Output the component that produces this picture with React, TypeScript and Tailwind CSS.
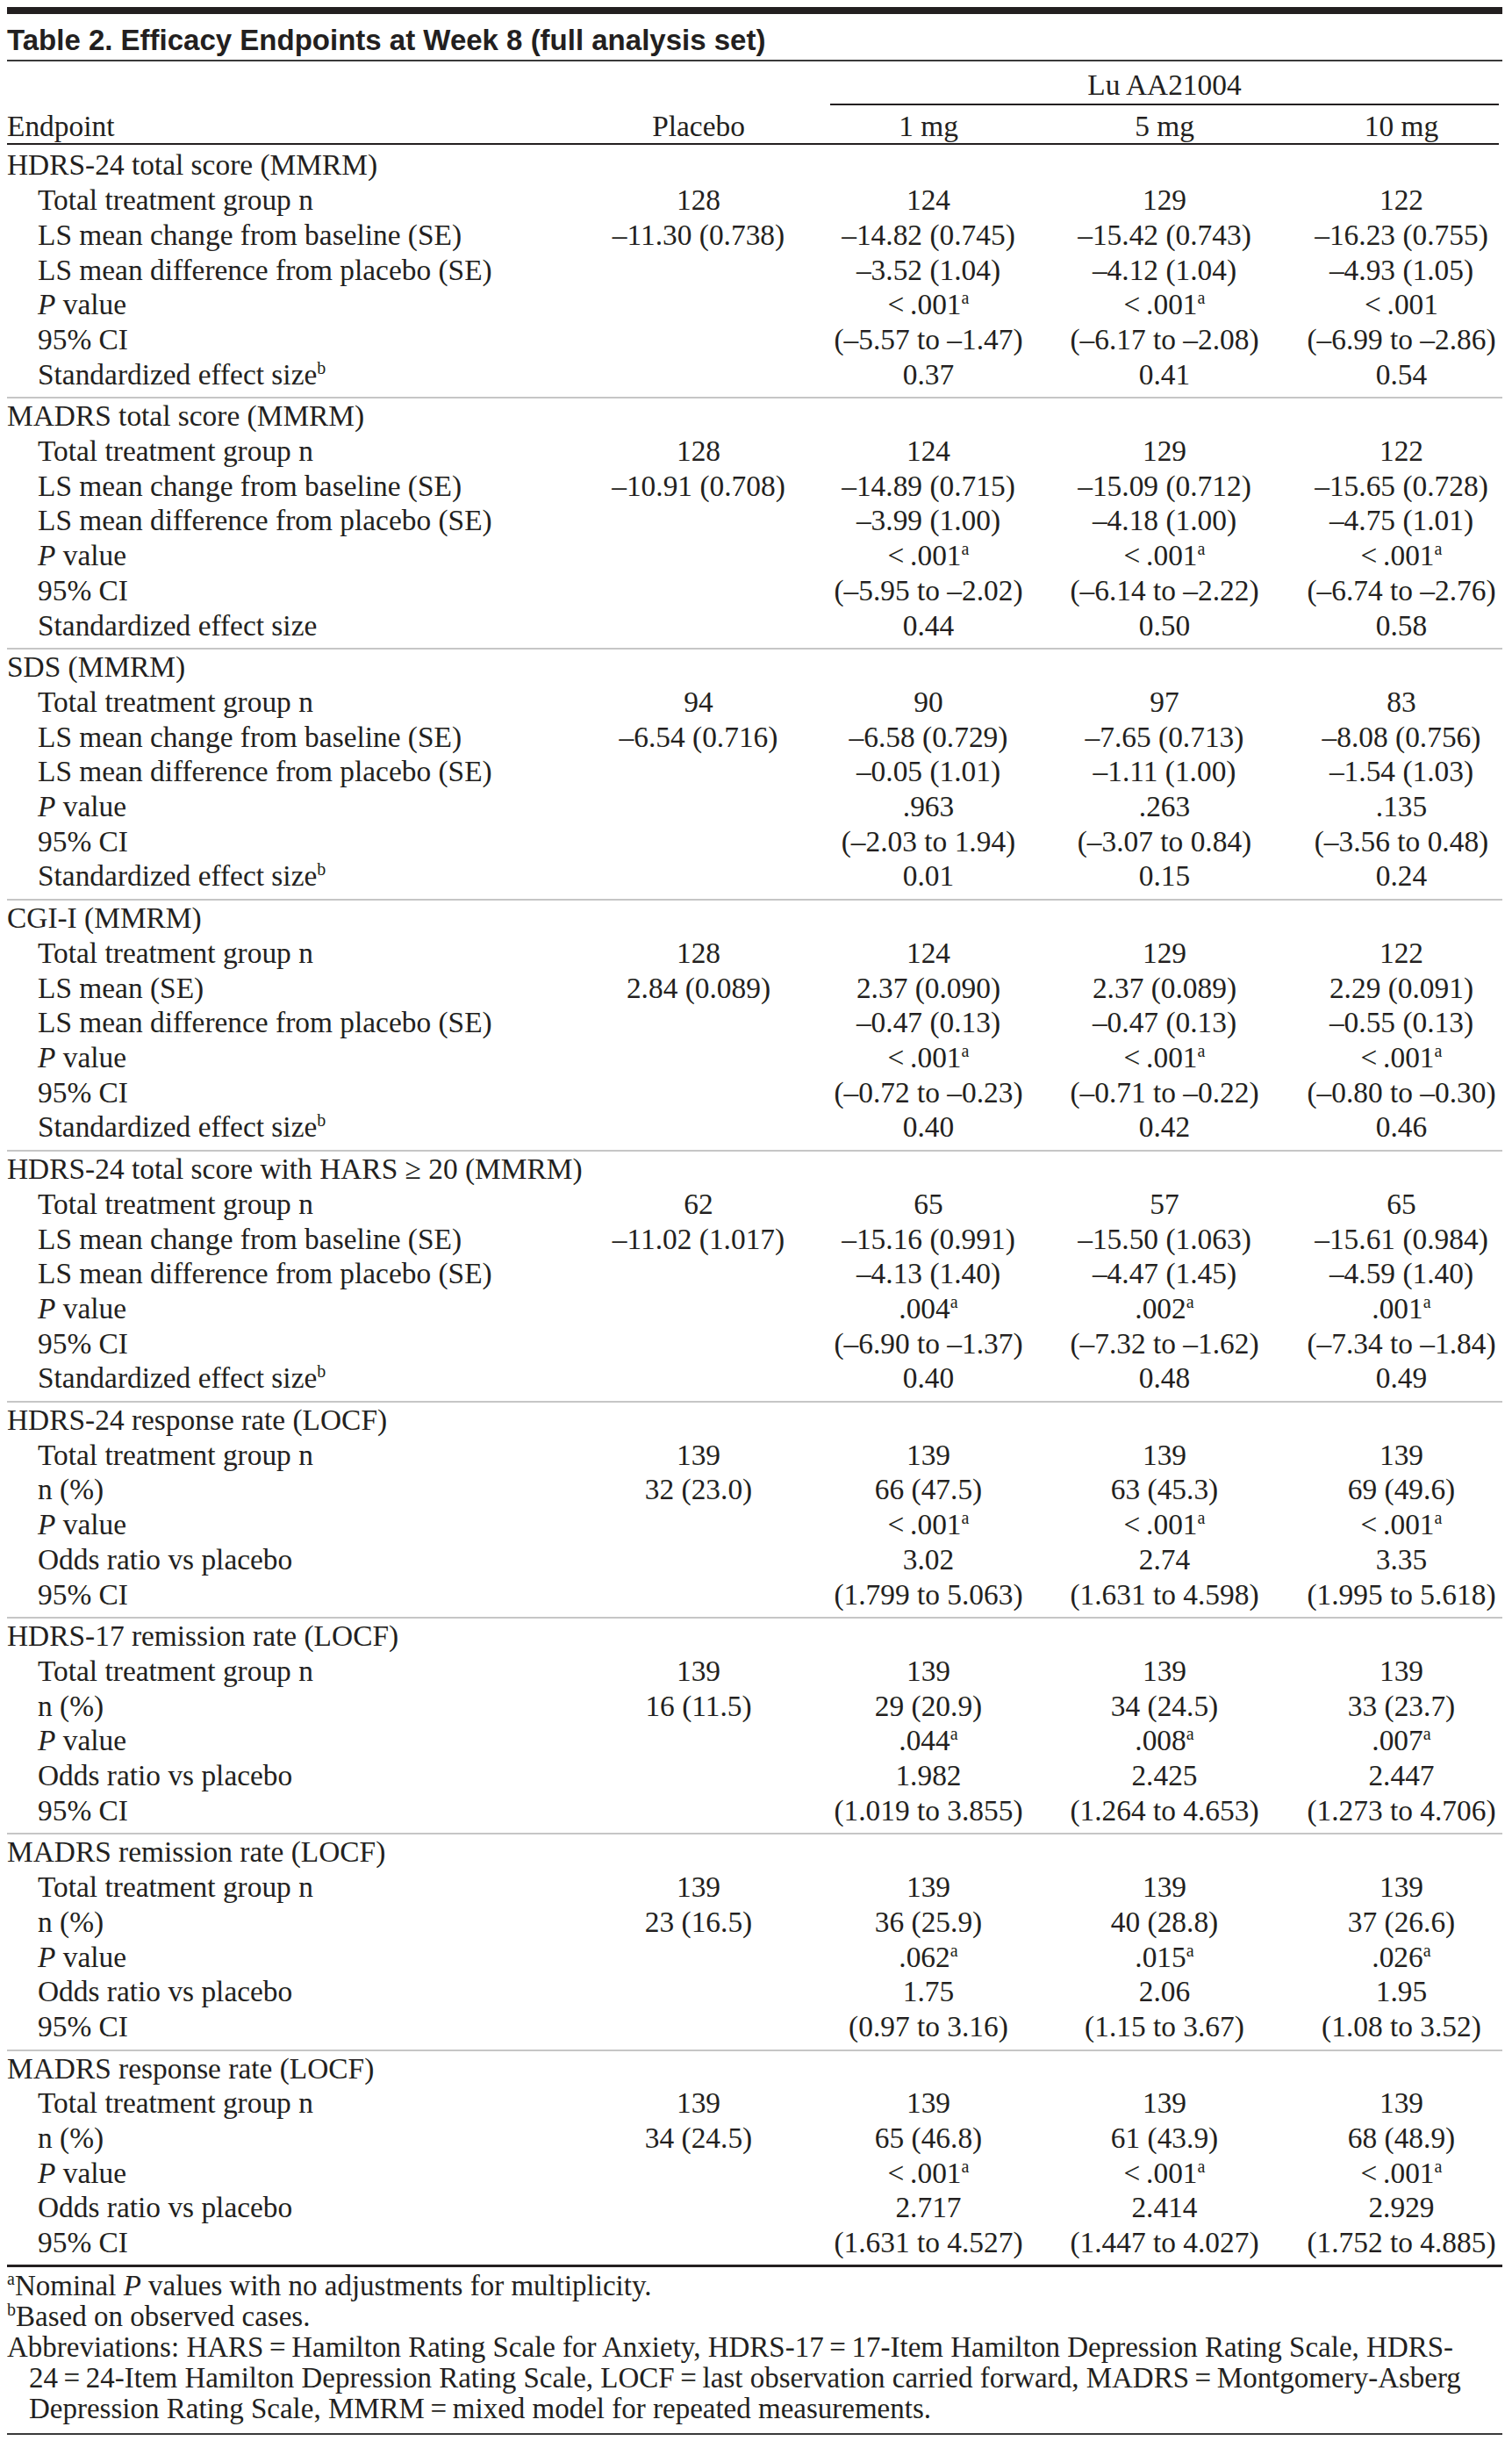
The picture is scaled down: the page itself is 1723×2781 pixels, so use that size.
import React from 'react';

const GRID = 'grid grid-cols-[657px_262px_262px_276px_247px]';

function Sup({ c }: { c: string }) {
  return <sup className="text-[20px] top-[-12px]">{c}</sup>;
}

function V({ v }: { v: string }) {
  if (!v) return null;
  let s = v;
  let sup: string | null = null;
  if (s.endsWith('a')) {
    sup = 'a';
    s = s.slice(0, -1);
  }
  s = s.replace(/-/g, '\u2013').replace('<', '<\u2009');
  return (
    <>
      {s}
      {sup && <Sup c={sup} />}
    </>
  );
}

type Row = { label: React.ReactNode; vals: string[] };
type Section = { title: React.ReactNode; rows: Row[] };

const PV = (
  <>
    <i>P</i> value
  </>
);
const STDB = (
  <>
    Standardized effect size
    <Sup c="b" />
  </>
);
const N = 'Total treatment group n';
const CHG = 'LS mean change from baseline (SE)';
const DIF = 'LS mean difference from placebo (SE)';
const CI = '95% CI';
const OR = 'Odds ratio vs placebo';
const NP = 'n (%)';

const sections: Section[] = [
  {
    title: 'HDRS-24 total score (MMRM)',
    rows: [
      { label: N, vals: ['128', '124', '129', '122'] },
      { label: CHG, vals: ['-11.30 (0.738)', '-14.82 (0.745)', '-15.42 (0.743)', '-16.23 (0.755)'] },
      { label: DIF, vals: ['', '-3.52 (1.04)', '-4.12 (1.04)', '-4.93 (1.05)'] },
      { label: PV, vals: ['', '<.001a', '<.001a', '<.001'] },
      { label: CI, vals: ['', '(-5.57 to -1.47)', '(-6.17 to -2.08)', '(-6.99 to -2.86)'] },
      { label: STDB, vals: ['', '0.37', '0.41', '0.54'] },
    ],
  },
  {
    title: 'MADRS total score (MMRM)',
    rows: [
      { label: N, vals: ['128', '124', '129', '122'] },
      { label: CHG, vals: ['-10.91 (0.708)', '-14.89 (0.715)', '-15.09 (0.712)', '-15.65 (0.728)'] },
      { label: DIF, vals: ['', '-3.99 (1.00)', '-4.18 (1.00)', '-4.75 (1.01)'] },
      { label: PV, vals: ['', '<.001a', '<.001a', '<.001a'] },
      { label: CI, vals: ['', '(-5.95 to -2.02)', '(-6.14 to -2.22)', '(-6.74 to -2.76)'] },
      { label: 'Standardized effect size', vals: ['', '0.44', '0.50', '0.58'] },
    ],
  },
  {
    title: 'SDS (MMRM)',
    rows: [
      { label: N, vals: ['94', '90', '97', '83'] },
      { label: CHG, vals: ['-6.54 (0.716)', '-6.58 (0.729)', '-7.65 (0.713)', '-8.08 (0.756)'] },
      { label: DIF, vals: ['', '-0.05 (1.01)', '-1.11 (1.00)', '-1.54 (1.03)'] },
      { label: PV, vals: ['', '.963', '.263', '.135'] },
      { label: CI, vals: ['', '(-2.03 to 1.94)', '(-3.07 to 0.84)', '(-3.56 to 0.48)'] },
      { label: STDB, vals: ['', '0.01', '0.15', '0.24'] },
    ],
  },
  {
    title: 'CGI-I (MMRM)',
    rows: [
      { label: N, vals: ['128', '124', '129', '122'] },
      { label: 'LS mean (SE)', vals: ['2.84 (0.089)', '2.37 (0.090)', '2.37 (0.089)', '2.29 (0.091)'] },
      { label: DIF, vals: ['', '-0.47 (0.13)', '-0.47 (0.13)', '-0.55 (0.13)'] },
      { label: PV, vals: ['', '<.001a', '<.001a', '<.001a'] },
      { label: CI, vals: ['', '(-0.72 to -0.23)', '(-0.71 to -0.22)', '(-0.80 to -0.30)'] },
      { label: STDB, vals: ['', '0.40', '0.42', '0.46'] },
    ],
  },
  {
    title: 'HDRS-24 total score with HARS \u2265 20 (MMRM)',
    rows: [
      { label: N, vals: ['62', '65', '57', '65'] },
      { label: CHG, vals: ['-11.02 (1.017)', '-15.16 (0.991)', '-15.50 (1.063)', '-15.61 (0.984)'] },
      { label: DIF, vals: ['', '-4.13 (1.40)', '-4.47 (1.45)', '-4.59 (1.40)'] },
      { label: PV, vals: ['', '.004a', '.002a', '.001a'] },
      { label: CI, vals: ['', '(-6.90 to -1.37)', '(-7.32 to -1.62)', '(-7.34 to -1.84)'] },
      { label: STDB, vals: ['', '0.40', '0.48', '0.49'] },
    ],
  },
  {
    title: 'HDRS-24 response rate (LOCF)',
    rows: [
      { label: N, vals: ['139', '139', '139', '139'] },
      { label: NP, vals: ['32 (23.0)', '66 (47.5)', '63 (45.3)', '69 (49.6)'] },
      { label: PV, vals: ['', '<.001a', '<.001a', '<.001a'] },
      { label: OR, vals: ['', '3.02', '2.74', '3.35'] },
      { label: CI, vals: ['', '(1.799 to 5.063)', '(1.631 to 4.598)', '(1.995 to 5.618)'] },
    ],
  },
  {
    title: 'HDRS-17 remission rate (LOCF)',
    rows: [
      { label: N, vals: ['139', '139', '139', '139'] },
      { label: NP, vals: ['16 (11.5)', '29 (20.9)', '34 (24.5)', '33 (23.7)'] },
      { label: PV, vals: ['', '.044a', '.008a', '.007a'] },
      { label: OR, vals: ['', '1.982', '2.425', '2.447'] },
      { label: CI, vals: ['', '(1.019 to 3.855)', '(1.264 to 4.653)', '(1.273 to 4.706)'] },
    ],
  },
  {
    title: 'MADRS remission rate (LOCF)',
    rows: [
      { label: N, vals: ['139', '139', '139', '139'] },
      { label: NP, vals: ['23 (16.5)', '36 (25.9)', '40 (28.8)', '37 (26.6)'] },
      { label: PV, vals: ['', '.062a', '.015a', '.026a'] },
      { label: OR, vals: ['', '1.75', '2.06', '1.95'] },
      { label: CI, vals: ['', '(0.97 to 3.16)', '(1.15 to 3.67)', '(1.08 to 3.52)'] },
    ],
  },
  {
    title: 'MADRS response rate (LOCF)',
    rows: [
      { label: N, vals: ['139', '139', '139', '139'] },
      { label: NP, vals: ['34 (24.5)', '65 (46.8)', '61 (43.9)', '68 (48.9)'] },
      { label: PV, vals: ['', '<.001a', '<.001a', '<.001a'] },
      { label: OR, vals: ['', '2.717', '2.414', '2.929'] },
      { label: CI, vals: ['', '(1.631 to 4.527)', '(1.447 to 4.027)', '(1.752 to 4.885)'] },
    ],
  },
];

function DataRow({ label, vals, indent }: { label: React.ReactNode; vals: string[]; indent: boolean }) {
  return (
    <div className={`${GRID} leading-[39.7px]`}>
      <div className={indent ? 'pl-[35px]' : ''}>{label}</div>
      <div className="text-center">
        <V v={vals[0]} />
      </div>
      <div className="text-center">
        <V v={vals[1]} />
      </div>
      <div className="text-center">
        <V v={vals[2]} />
      </div>
      <div className="text-center pl-[17px]">
        <V v={vals[3]} />
      </div>
    </div>
  );
}

export default function App() {
  return (
    <div className="min-h-[2781px] w-[1723px] bg-white text-[#231f20]">
      <div className="ml-[8px] w-[1704px] pt-[8px] font-['Liberation_Serif',serif] text-[33.4px] whitespace-nowrap">
        <div className="h-[8px] bg-[#231f20]" />
        <div className="mt-[10px] font-['Liberation_Sans',Arial,sans-serif] text-[33px] font-bold leading-[40px]">
          Table 2. Efficacy Endpoints at Week 8 (full analysis set)
        </div>
        <div className="mt-[2px] h-[2px] bg-[#3a3a3a]" />

        <div className={GRID}>
          <div className="col-start-3 col-span-3 ml-[19px] mr-[4px] border-b-2 border-[#231f20] pb-[1px] pt-[7px] text-center leading-[39.7px]">
            Lu AA21004
          </div>
        </div>
        <div className={`${GRID} mr-[4px] border-b-2 border-[#231f20] pt-[4px] leading-[39.7px]`}>
          <div>Endpoint</div>
          <div className="text-center">Placebo</div>
          <div className="text-center">1 mg</div>
          <div className="text-center">5 mg</div>
          <div className="text-center pl-[17px]">10 mg</div>
        </div>

        <div className="pt-[3px]">
          {sections.map((sec, i) => (
            <div key={i}>
              {i > 0 && <div className="mt-[6px] h-[2px] bg-[#c6c6c6]" />}
              <div className="leading-[39.7px]">{sec.title}</div>
              {sec.rows.map((r, j) => (
                <DataRow key={j} label={r.label} vals={r.vals} indent />
              ))}
            </div>
          ))}
        </div>
        <div className="mt-[5px] h-[3px] bg-[#231f20]" />

        <div className="mt-[4px] text-[33px] leading-[35px]">
          <div>
            <Sup c="a" />
            Nominal <i>P</i> values with no adjustments for multiplicity.
          </div>
          <div>
            <Sup c="b" />
            Based on observed cases.
          </div>
          <div>
            Abbreviations: HARS{'\u2009=\u2009'}Hamilton Rating Scale for Anxiety, HDRS-17{'\u2009=\u2009'}17-Item Hamilton
            Depression Rating Scale, HDRS-
          </div>
          <div className="pl-[25px]">
            24{'\u2009=\u2009'}24-Item Hamilton Depression Rating Scale, LOCF{'\u2009=\u2009'}last observation carried
            forward, MADRS{'\u2009=\u2009'}Montgomery-Asberg
          </div>
          <div className="pl-[25px]">
            Depression Rating Scale, MMRM{'\u2009=\u2009'}mixed model for repeated measurements.
          </div>
        </div>
        <div className="mt-[10px] h-[2px] bg-[#3a3a3a]" />
      </div>
    </div>
  );
}
